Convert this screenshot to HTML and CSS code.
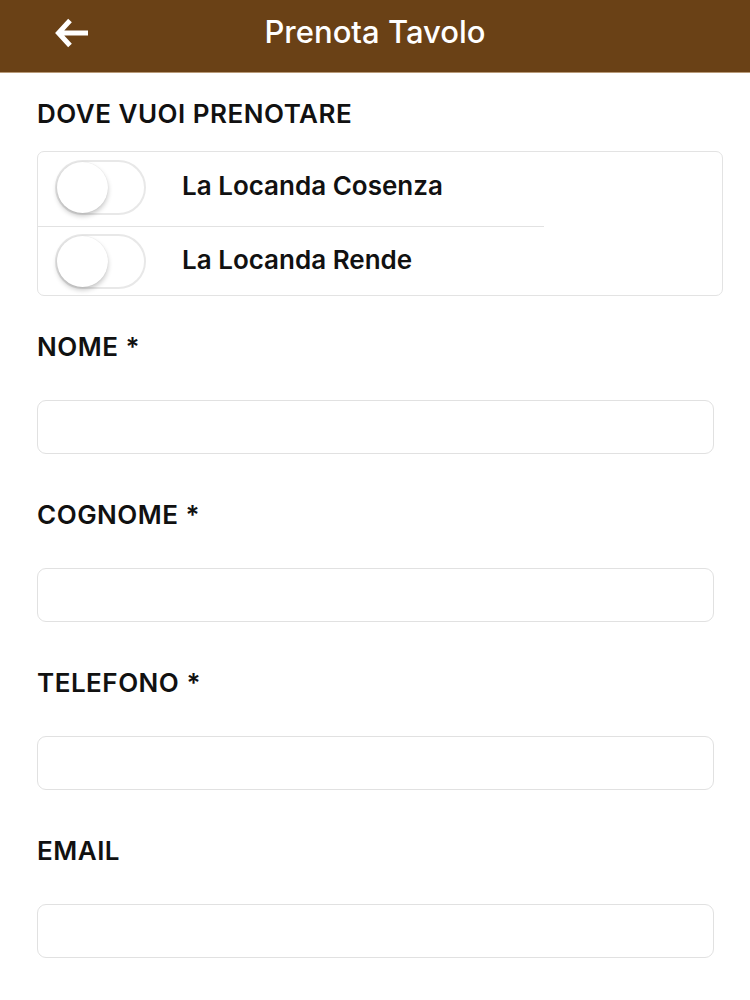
FILE: index.html
```html
<!DOCTYPE html>
<html lang="it">
<head>
<meta charset="utf-8">
<title>Prenota Tavolo</title>
<link rel="stylesheet" href="styles.css">
</head>
<body>
<header class="topbar">
  <button class="back" aria-label="Indietro">
    <svg width="34" height="30" viewBox="0 0 34 30"><path d="M15 2.5 L3.5 15 L15 27.5 M4 15 H33" fill="none" stroke="#fff" stroke-width="5" stroke-linecap="butt" stroke-linejoin="miter"/></svg>
  </button>
  <h1 class="title">Prenota Tavolo</h1>
</header>
<main class="content">
  <div class="label">DOVE VUOI PRENOTARE</div>
  <div class="card">
    <div class="row">
      <span class="toggle"><span class="knob"></span></span>
      <span class="row-text">La Locanda Cosenza</span>
    </div>
    <div class="sep"></div>
    <div class="row">
      <span class="toggle"><span class="knob"></span></span>
      <span class="row-text">La Locanda Rende</span>
    </div>
  </div>
  <div class="field">
    <div class="label">NOME *</div>
    <div class="input"></div>
  </div>
  <div class="field">
    <div class="label">COGNOME *</div>
    <div class="input"></div>
  </div>
  <div class="field">
    <div class="label">TELEFONO *</div>
    <div class="input"></div>
  </div>
  <div class="field">
    <div class="label">EMAIL</div>
    <div class="input"></div>
  </div>
</main>
</body>
</html>
```
FILE: styles.css
```css
* { box-sizing: border-box; }
html, body { margin: 0; padding: 0; background: #fff; }
body { font-family: Inter, "Open Sans", sans-serif; color: #111; }
.topbar {
  height: 73px;
  background: #6a4116;
  border-bottom: 1px solid #b89a78;
  display: flex;
  align-items: center;
  justify-content: center;
  position: relative;
  padding-bottom: 8px;
}
.back {
  position: absolute;
  left: 55px;
  top: 18px;
  background: none;
  border: 0;
  padding: 0;
  width: 34px;
  height: 30px;
}
.back svg { display: block; }
.title {
  margin: 0;
  color: #fff;
  font-size: 31px;
  font-weight: 500;
  line-height: 36px;
}
.content { padding: 0 37px; }
.label {
  font-size: 26px;
  font-weight: 600;
  line-height: 30px;
  letter-spacing: 0.5px;
  color: #111;
}
.content > .label { margin-top: 26px; }
.card {
  margin-top: 22px;
  width: 686px;
  border: 1px solid #e3e3e3;
  border-radius: 7px;
}
.row {
  height: 74px;
  display: flex;
  align-items: center;
  padding-left: 17px;
  padding-bottom: 3px;
}
.sep + .row { height: 68px; padding-bottom: 0; }
.sep { height: 1px; width: 506px; background: #e2e2e2; }
.toggle {
  width: 91px;
  height: 55px;
  border: 2px solid #e8e8e8;
  border-radius: 28px;
  position: relative;
  flex: none;
}
.knob {
  position: absolute;
  left: 0;
  top: 0;
  width: 51px;
  height: 51px;
  border-radius: 50%;
  background: #fff;
  box-shadow: 0 3px 5px rgba(0,0,0,0.22), 0 0 1px rgba(0,0,0,0.12);
}
.row-text {
  margin-left: 36px;
  font-size: 26px;
  font-weight: 600;
  padding-bottom: 4px;
}
.field { margin-top: 46px; }
.card + .field { margin-top: 36px; }
.input {
  margin-top: 38px;
  width: 677px;
  height: 54px;
  border: 1px solid #e1e1e1;
  border-radius: 9px;
}
```
